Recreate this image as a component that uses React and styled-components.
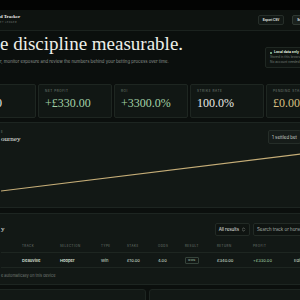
import React from "react";
import styled, { createGlobalStyle } from "styled-components";
import { ChevronsUpDown } from "lucide-react";

const GlobalStyle = createGlobalStyle`
  * { box-sizing: border-box; }
  html, body {
    margin: 0;
    padding: 0;
    background: #0b0f0d;
    overflow: hidden;
  }
  body {
    width: 300px;
    height: 300px;
    font-family: "Inter", "Liberation Sans", sans-serif;
    color: #e6e9e4;
  }
`;

const Page = styled.div`
  width: 300px;
  height: 300px;
  overflow: hidden;
  background: #0b0f0d;
`;

const TopStrip = styled.div`
  height: 10px;
  background: #030403;
`;

const Header = styled.header`
  height: 21px;
  background: #0e1310;
  border-bottom: 1px solid #1b221e;
  display: flex;
  align-items: center;
  justify-content: space-between;
`;

const Brand = styled.div`
  display: flex;
  flex-direction: column;
  gap: 1px;
  margin-top: -2px;
`;

const BrandName = styled.span`
  font-family: "Liberation Serif", serif;
  font-weight: 700;
  font-size: 4.8px;
  line-height: 6px;
  color: #eef0eb;
`;

const BrandSub = styled.span`
  font-size: 2.4px;
  line-height: 3px;
  letter-spacing: 0.45px;
  color: #6f7872;
  text-transform: uppercase;
`;

const HeaderActions = styled.div`
  display: flex;
  gap: 8px;
  margin-right: -14px;
`;

const HeaderButton = styled.button`
  height: 10px;
  padding: 0 4px;
  border: 1px solid ${(p) => (p.$primary ? "#2f3832" : "#262e29")};
  border-radius: 2px;
  background: ${(p) => (p.$primary ? "#1a211d" : "#121815")};
  color: #e8ebe6;
  font-family: "Liberation Sans", sans-serif;
  font-weight: 700;
  font-size: 3px;
  line-height: 8px;
  white-space: nowrap;
`;

const Hero = styled.section`
  display: flex;
  justify-content: space-between;
  align-items: flex-start;
  padding-top: 3px;
`;

const HeroText = styled.div`
  display: flex;
  flex-direction: column;
`;

const Headline = styled.h1`
  margin: 0;
  font-family: "Liberation Serif", serif;
  font-weight: 400;
  font-size: 19px;
  line-height: 19px;
  color: #eef0ea;
  white-space: nowrap;
`;

const Lede = styled.p`
  margin: 6px 0 0;
  font-size: 4.3px;
  line-height: 6px;
  color: #8b948d;
  white-space: nowrap;
`;

const InfoBox = styled.div`
  width: 45px;
  margin-top: 13px;
  margin-right: -10px;
  padding: 2px 4px;
  border: 1px solid #1f2722;
  border-radius: 2px;
  background: #0f1411;
  display: flex;
  flex-direction: column;
`;

const InfoLine = styled.span`
  display: flex;
  align-items: center;
  gap: 2px;
  font-size: ${(p) => (p.$strong ? "3.4px" : "3.2px")};
  line-height: 5px;
  font-weight: ${(p) => (p.$strong ? 700 : 400)};
  color: ${(p) => (p.$strong ? "#dfe3de" : "#737c75")};
  white-space: nowrap;
`;

const Dot = styled.i`
  width: 2px;
  height: 2px;
  border-radius: 50%;
  background: #8fcf9c;
`;

const StatsRow = styled.section`
  display: grid;
  grid-template-columns: repeat(5, 74px);
  gap: 2px;
  margin: 16px 0 0 -38px;
`;

const StatCard = styled.div`
  height: 34px;
  padding: 4px 6px 0;
  background: #111714;
  border: 1px solid #1e2621;
  border-radius: 2px;
  display: flex;
  flex-direction: column;
`;

const StatLabel = styled.span`
  font-size: 3.1px;
  line-height: 4px;
  letter-spacing: 0.55px;
  text-transform: uppercase;
  color: #78817a;
  white-space: nowrap;
`;

const StatValue = styled.span`
  margin-top: 3.5px;
  font-family: "Liberation Serif", serif;
  font-size: 12px;
  line-height: 12px;
  color: ${(p) => p.$color || "#e8ebe5"};
  white-space: nowrap;
`;

const Panel = styled.section`
  width: calc(100% + 20px);
  margin: ${(p) => p.$gap || 0}px 0 0 -10px;
  padding: ${(p) => p.$padTop || 0}px 10px ${(p) => p.$padBottom || 0}px;
  background: #121815;
  border: 1px solid #1d2521;
  border-radius: 3px;
`;

const PanelHead = styled.div`
  display: flex;
  justify-content: space-between;
  align-items: center;
`;

const TitleBlock = styled.div`
  display: flex;
  flex-direction: column;
`;

const Eyebrow = styled.span`
  font-size: 3px;
  line-height: 5px;
  letter-spacing: 0.5px;
  color: #747d76;
  text-transform: uppercase;
`;

const PanelTitle = styled.h2`
  margin: 0;
  font-family: "Liberation Serif", serif;
  font-weight: 400;
  font-size: 7px;
  line-height: 9px;
  color: #e8ebe6;
  white-space: nowrap;
`;

const Pill = styled.span`
  height: 14px;
  padding: 0 3px;
  margin-right: -2px;
  display: flex;
  align-items: center;
  background: #161c19;
  border: 1px solid #252d28;
  border-radius: 2px;
  font-size: 4.4px;
  color: #c9cfc9;
  white-space: nowrap;
`;

const ChartSvg = styled.svg`
  display: block;
  margin-top: 5px;
`;

const Controls = styled.div`
  display: flex;
  gap: 3px;
  margin-right: -10px;
`;

const SelectBox = styled.div`
  height: 13px;
  padding: 0 3px;
  display: flex;
  align-items: center;
  gap: 2px;
  background: #0f1411;
  border: 1px solid #222a25;
  border-radius: 2px;
  font-size: 4.4px;
  color: #e3e6e1;
  white-space: nowrap;
`;

const SearchBox = styled.div`
  width: 56px;
  height: 13px;
  padding: 0 3px;
  display: flex;
  align-items: center;
  background: #0f1411;
  border: 1px solid #222a25;
  border-radius: 2px;
  font-size: 4.4px;
  color: #a9b0aa;
  white-space: nowrap;
  overflow: hidden;
`;

const Table = styled.div`
  margin-top: 4px;
  display: grid;
  grid-template-columns: 21px 38px 41px 26px 31px 27px 32px 36px 41px 30px;
`;

const Row = styled.div`
  display: contents;
`;

const HeadCell = styled.div`
  height: 13px;
  display: flex;
  align-items: center;
  border-bottom: 1px solid #1e2621;
  font-size: 2.9px;
  letter-spacing: 0.5px;
  text-transform: uppercase;
  color: #737c75;
  white-space: nowrap;
`;

const Cell = styled.div`
  height: 15px;
  display: flex;
  align-items: center;
  border-bottom: 1px solid #1e2621;
  font-size: 4.1px;
  font-weight: ${(p) => (p.$bold ? 600 : 400)};
  color: ${(p) => p.$color || "#dde1dc"};
  white-space: nowrap;
`;

const ResultBadge = styled.span`
  padding: 1px 2px;
  border: 1px solid #36443b;
  border-radius: 1px;
  font-size: 2.6px;
  line-height: 3px;
  letter-spacing: 0.4px;
  color: #bcd3bf;
`;

const Footnote = styled.p`
  margin: 5px 0 0;
  font-size: 3.9px;
  line-height: 5px;
  color: #737c75;
  white-space: nowrap;
`;

const BottomGrid = styled.section`
  display: grid;
  grid-template-columns: 156px 1fr;
  gap: 3px;
  width: 330px;
  margin: 4px 0 0 -10px;
`;

const BottomCard = styled.div`
  height: 40px;
  padding: 7px 11px;
  background: #121815;
  border: 1px solid #1d2521;
  border-radius: 3px;
`;

const green = "#a3d2a6";
const gold = "#d8c184";

const stats = [
  { label: "Total staked", value: "£10.00" },
  { label: "Net profit", value: "+£330.00", color: green },
  { label: "ROI", value: "+3300.0%", color: green },
  { label: "Strike rate", value: "100.0%" },
  { label: "Pending stake", value: "£0.00", color: gold },
];

const columns = ["", "Track", "Selection", "Type", "Stake", "Odds", "Result", "Return", "Profit", ""];

export default function App() {
  return (
    <Page>
      <GlobalStyle />
      <TopStrip />
      <Header>
        <Brand>
          <BrandName>d Tracker</BrandName>
          <BrandSub>et ledger</BrandSub>
        </Brand>
        <HeaderActions>
          <HeaderButton>Export CSV</HeaderButton>
          <HeaderButton $primary>Settings</HeaderButton>
        </HeaderActions>
      </Header>

      <Hero>
        <HeroText>
          <Headline>e discipline measurable.</Headline>
          <Lede>
            r, monitor exposure and review the numbers behind your betting process over time.
          </Lede>
        </HeroText>
        <InfoBox>
          <InfoLine $strong>
            <Dot />
            Local data only
          </InfoLine>
          <InfoLine>Stored in this browser</InfoLine>
          <InfoLine>No account needed</InfoLine>
        </InfoBox>
      </Hero>

      <StatsRow>
        {stats.map((s) => (
          <StatCard key={s.label}>
            <StatLabel>{s.label}</StatLabel>
            <StatValue $color={s.color}>{s.value}</StatValue>
          </StatCard>
        ))}
      </StatsRow>

      <Panel $gap={4} $padTop={7} $padBottom={6}>
        <PanelHead>
          <TitleBlock>
            <Eyebrow>e</Eyebrow>
            <PanelTitle>ourney</PanelTitle>
          </TitleBlock>
          <Pill>1 settled bet</Pill>
        </PanelHead>
        <ChartSvg width="300" height="52" viewBox="0 0 300 52">
          <line x1="0" y1="42" x2="300" y2="5" stroke="#c6ae78" strokeWidth="1.1" />
        </ChartSvg>
      </Panel>

      <Panel $gap={5} $padTop={9} $padBottom={6}>
        <PanelHead>
          <PanelTitle>y</PanelTitle>
          <Controls>
            <SelectBox>
              All results
              <ChevronsUpDown size={5} strokeWidth={2} color="#c9cec8" />
            </SelectBox>
            <SearchBox>Search track or horse</SearchBox>
          </Controls>
        </PanelHead>
        <Table>
          <Row>
            {columns.map((c, i) => (
              <HeadCell key={i}>{c}</HeadCell>
            ))}
          </Row>
          <Row>
            <Cell />
            <Cell $bold>Deauville</Cell>
            <Cell $bold>Hooper</Cell>
            <Cell>Win</Cell>
            <Cell>£10.00</Cell>
            <Cell>4.00</Cell>
            <Cell>
              <ResultBadge>WON</ResultBadge>
            </Cell>
            <Cell>£340.00</Cell>
            <Cell $color={green}>+£330.00</Cell>
            <Cell>Edit</Cell>
          </Row>
        </Table>
        <Footnote>e automatically on this device</Footnote>
      </Panel>

      <BottomGrid>
        <BottomCard />
        <BottomCard>
          <Eyebrow>Notes</Eyebrow>
        </BottomCard>
      </BottomGrid>
    </Page>
  );
}
